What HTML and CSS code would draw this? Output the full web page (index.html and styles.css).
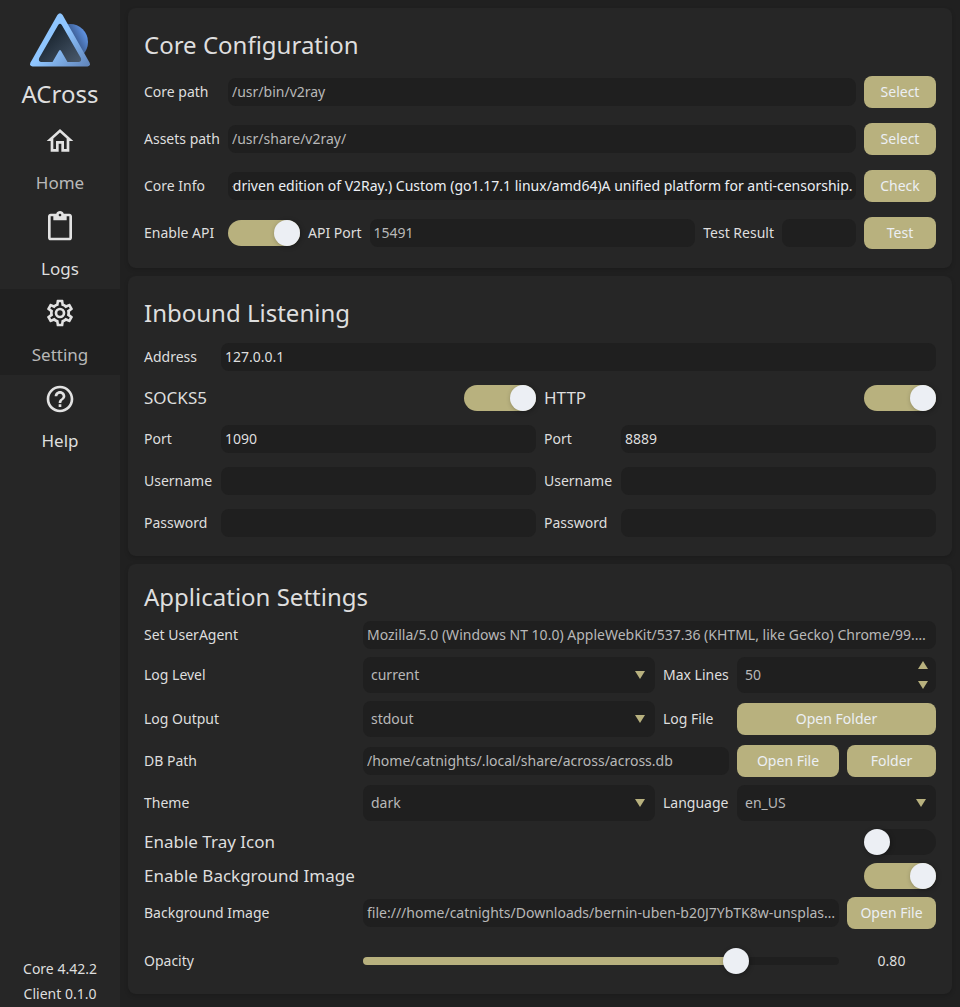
FILE: index.html
```html
<!DOCTYPE html>
<html lang="en">
<head>
<meta charset="utf-8">
<title>ACross</title>
<link rel="stylesheet" href="styles.css">
</head>
<body>
<div class="app">
  <aside class="sidebar">
    <svg class="logo" viewBox="0 0 60 54" aria-hidden="true">
      <defs>
        <linearGradient id="edge" x1="0.3" y1="0.4" x2="1" y2="1"><stop offset="0.2" stop-color="#8fc6ff"/><stop offset="1" stop-color="#5f82b8"/></linearGradient>
        <linearGradient id="core" x1="0.2" y1="0.2" x2="1" y2="1"><stop offset="0" stop-color="#17222c"/><stop offset="1" stop-color="#4a5a6d"/></linearGradient>
        <linearGradient id="moon" x1="0.45" y1="0.6" x2="1" y2="0.3"><stop offset="0.2" stop-color="#2f4a78"/><stop offset="1" stop-color="#6499ea"/></linearGradient>
      </defs>
      <circle cx="40" cy="29" r="18" fill="url(#moon)"/>
      <path d="M27.400 2Q30-1.400 32.600 2L59.500 49.500Q61 53 57.500 53.600H2.500Q-1 53 .5 49.500Z" fill="url(#edge)"/>
      <path d="M28.200 12Q30 9.500 31.800 12L50.800 45Q52 48.600 49 49H37.500L31 37.800Q30 36.200 29 37.800L22.500 49H11Q8 48.600 9.200 45Z" fill="url(#core)"/>
    </svg>
    <h1 class="brand">ACross</h1>
    <nav class="nav">
      <a class="nav-item dim" href="#home">
        <svg class="icon" viewBox="0 0 24 24" aria-hidden="true"><path d="M12 5.690l5 4.500V18h-2v-6H9v6H7v-7.810l5-4.500M12 3L2 12h3v8h6v-6h2v6h6v-8h3L12 3z"/></svg>
        <span>Home</span>
      </a>
      <a class="nav-item" href="#logs">
        <svg class="icon" viewBox="0 0 24 24" aria-hidden="true"><path d="M19 2h-4.180C14.400.84 13.300 0 12 0c-1.300 0-2.400.84-2.820 2H5c-1.100 0-2 .9-2 2v16c0 1.100.9 2 2 2h14c1.100 0 2-.9 2-2V4c0-1.100-.9-2-2-2zm-7 0c.55 0 1 .45 1 1s-.45 1-1 1-1-.45-1-1 .45-1 1-1zm7 18H5V4h2v3h10V4h2v16z"/></svg>
        <span>Logs</span>
      </a>
      <a class="nav-item dim current" href="#setting" aria-current="page">
        <svg class="icon" viewBox="0 0 24 24" aria-hidden="true"><path d="M12 8a4 4 0 0 1 4 4 4 4 0 0 1-4 4 4 4 0 0 1-4-4 4 4 0 0 1 4-4m0 2a2 2 0 0 0-2 2 2 2 0 0 0 2 2 2 2 0 0 0 2-2 2 2 0 0 0-2-2m-2 12c-.25 0-.46-.18-.5-.42l-.37-2.650c-.63-.25-1.170-.59-1.690-.99l-2.490 1.010c-.22.08-.49 0-.61-.22l-2-3.460a.493.493 0 0 1 .12-.64l2.110-1.660L4.500 12l.07-1-2.110-1.630a.493.493 0 0 1-.12-.64l2-3.460c.12-.22.39-.31.61-.22l2.490 1c.52-.39 1.060-.73 1.690-.98l.37-2.650c.04-.24.25-.42.5-.42h4c.25 0 .46.18.5.42l.37 2.650c.63.25 1.170.59 1.690.98l2.490-1c.22-.09.49 0 .61.22l2 3.460c.13.22.07.49-.12.64L19.430 11l.07 1-.07 1 2.110 1.630c.19.15.25.42.12.64l-2 3.460c-.12.22-.39.31-.61.22l-2.490-1c-.52.39-1.060.73-1.690.98l-.37 2.650c-.04.24-.25.42-.5.42h-4m1.250-18-.37 2.610c-1.200.25-2.260.89-3.030 1.780L5.440 7.350l-.75 1.300L6.800 10.200a5.550 5.550 0 0 0 0 3.600l-2.120 1.560.75 1.300 2.430-1.040c.77.88 1.820 1.520 3.010 1.760l.37 2.620h1.520l.37-2.610c1.190-.25 2.240-.89 3.010-1.770l2.430 1.040.75-1.300-2.120-1.550c.4-1.170.4-2.440 0-3.610l2.110-1.550-.75-1.300-2.410 1.040a5.420 5.420 0 0 0-3.030-1.770L12.750 4h-1.500z"/></svg>
        <span>Setting</span>
      </a>
      <a class="nav-item" href="#help">
        <svg class="icon" viewBox="0 0 24 24" aria-hidden="true"><path d="M11 18h2v-2h-2v2zm1-16C6.480 2 2 6.480 2 12s4.480 10 10 10 10-4.480 10-10S17.520 2 12 2zm0 18c-4.410 0-8-3.590-8-8s3.590-8 8-8 8 3.590 8 8-3.590 8-8 8zm0-14c-2.210 0-4 1.790-4 4h2c0-1.100.9-2 2-2s2 .9 2 2c0 2-3 1.750-3 5h2c0-2.250 3-2.500 3-5 0-2.210-1.790-4-4-4z"/></svg>
        <span>Help</span>
      </a>
    </nav>
    <footer class="versions">
      <p>Core 4.42.2</p>
      <p>Client 0.1.0</p>
    </footer>
  </aside>

  <main class="content">
    <section class="panel panel-core">
      <h2>Core Configuration</h2>
      <div class="core-grid">
        <label for="core-path">Core path</label>
        <input class="field dim" id="core-path" type="text" value="/usr/bin/v2ray" readonly>
        <button class="btn" type="button">Select</button>

        <label for="assets-path">Assets path</label>
        <input class="field dim" id="assets-path" type="text" value="/usr/share/v2ray/" readonly>
        <button class="btn" type="button">Select</button>

        <label for="core-info">Core Info</label>
        <input class="field bright" id="core-info" type="text" value="V2Ray 4.42.2 (V2Fly, a community-driven edition of V2Ray.) Custom (go1.17.1 linux/amd64)A unified platform for anti-censorship." readonly>
        <button class="btn" type="button">Check</button>

        <label for="enable-api">Enable API</label>
        <div class="api-row">
          <input class="switch" id="enable-api" type="checkbox" checked>
          <label for="api-port">API Port</label>
          <input class="field dim grow" id="api-port" type="text" value="15491">
          <label for="test-result">Test Result</label>
          <input class="field result" id="test-result" type="text" readonly>
        </div>
        <button class="btn" type="button">Test</button>
      </div>
    </section>

    <section class="panel panel-inbound">
      <h2>Inbound Listening</h2>
      <div class="inbound">
        <div class="pair">
          <label for="address">Address</label>
          <input class="field" id="address" type="text" value="127.0.0.1">
        </div>
        <div class="protocols">
          <div class="protocol">
            <div class="toggle-row"><label for="socks">SOCKS5</label><input class="switch" id="socks" type="checkbox" checked></div>
            <div class="pair"><label for="socks-port">Port</label><input class="field" id="socks-port" type="text" value="1090"></div>
            <div class="pair"><label for="socks-user">Username</label><input class="field" id="socks-user" type="text"></div>
            <div class="pair"><label for="socks-pass">Password</label><input class="field" id="socks-pass" type="password"></div>
          </div>
          <div class="protocol">
            <div class="toggle-row"><label for="http">HTTP</label><input class="switch" id="http" type="checkbox" checked></div>
            <div class="pair"><label for="http-port">Port</label><input class="field" id="http-port" type="text" value="8889"></div>
            <div class="pair"><label for="http-user">Username</label><input class="field" id="http-user" type="text"></div>
            <div class="pair"><label for="http-pass">Password</label><input class="field" id="http-pass" type="password"></div>
          </div>
        </div>
      </div>
    </section>

    <section class="panel panel-app">
      <h2>Application Settings</h2>
      <div class="app-grid">
        <label for="user-agent">Set UserAgent</label>
        <input class="field dim span-4" id="user-agent" type="text" value="Mozilla/5.0 (Windows NT 10.0) AppleWebKit/537.36 (KHTML, like Gecko) Chrome/99.0.4844.51 Safari/537.36">

        <label for="log-level">Log Level</label>
        <div class="select"><select id="log-level"><option>current</option></select></div>
        <label for="max-lines">Max Lines</label>
        <div class="spin span-2">
          <input id="max-lines" type="text" inputmode="numeric" value="50">
          <div class="spin-buttons">
            <button type="button" aria-label="Increase"><svg viewBox="0 0 10 8" aria-hidden="true"><path d="M5 0l5 8H0z"/></svg></button>
            <button type="button" aria-label="Decrease"><svg viewBox="0 0 10 8" aria-hidden="true"><path d="M0 0h10L5 8z"/></svg></button>
          </div>
        </div>

        <label for="log-output">Log Output</label>
        <div class="select"><select id="log-output"><option>stdout</option></select></div>
        <label for="log-folder">Log File</label>
        <button class="btn span-2" id="log-folder" type="button">Open Folder</button>

        <label for="db-path">DB Path</label>
        <input class="field dim span-2" id="db-path" type="text" value="/home/catnights/.local/share/across/across.db" readonly>
        <button class="btn" type="button">Open File</button>
        <button class="btn" type="button">Folder</button>

        <label for="theme">Theme</label>
        <div class="select"><select id="theme"><option>dark</option></select></div>
        <label for="language">Language</label>
        <div class="select span-2"><select id="language"><option>en_US</option></select></div>

        <div class="toggle-row span-all"><label for="tray">Enable Tray Icon</label><input class="switch" id="tray" type="checkbox"></div>
        <div class="toggle-row span-all"><label for="bg-enabled">Enable Background Image</label><input class="switch" id="bg-enabled" type="checkbox" checked></div>

        <label for="bg-image">Background Image</label>
        <input class="field dim span-3" id="bg-image" type="text" value="file:///home/catnights/Downloads/bernin-uben-b20J7YbTK8w-unsplash.jpg" readonly>
        <button class="btn" type="button">Open File</button>

        <label class="opacity-label" for="opacity">Opacity</label>
        <input class="slider span-3" id="opacity" type="range" min="0" max="1" step="0.01" value="0.8">
        <output class="opacity-value" for="opacity">0.80</output>
      </div>
    </section>
  </main>
</div>
<script src="script.js"></script>
</body>
</html>
```

FILE: styles.css
```css
:root {
  --bg: #202020;
  --panel: #262626;
  --field: #1f1f1f;
  --accent: #b8b17e;
  --knob: #eceff4;
  --text: #dedede;
  --dim: #b8b8b8;
}

* { box-sizing: border-box; }

body {
  margin: 0;
  background: var(--bg);
  color: var(--text);
  font: 14px/20px "Noto Sans", sans-serif;
}

h1, h2, p { margin: 0; }

input, select, button {
  min-width: 0;
  margin: 0;
  border: 0;
  color: inherit;
  font: inherit;
}

.app {
  display: flex;
  min-height: 100vh;
}

/* Sidebar */
.sidebar {
  display: flex;
  flex: 0 0 120px;
  flex-direction: column;
  align-items: center;
  padding-top: 13px;
  background: var(--panel);
}

.logo { width: 60px; height: 54px; }

.brand {
  margin: 9px 0 5px;
  font-size: 24px;
  font-weight: 400;
  line-height: 36px;
}

.nav { width: 100%; }

.nav-item {
  display: flex;
  flex-direction: column;
  align-items: center;
  gap: 14px;
  padding: 8px 0;
  color: var(--text);
  font-size: 17px;
  line-height: 24px;
  text-decoration: none;
}

.nav-item span { height: 24px; }
.nav-item.dim span { color: var(--dim); }
.nav-item.current { background: var(--bg); }

.icon {
  width: 32px;
  height: 32px;
  fill: #e2e2e2;
}

.versions {
  display: grid;
  gap: 5px;
  margin-top: auto;
  padding-bottom: 3px;
  text-align: center;
}

/* Panels */
.content {
  display: flex;
  flex: 1;
  flex-direction: column;
  gap: 8px;
  min-width: 0;
  padding: 8px;
}

.panel {
  padding: 19px 16px;
  border-radius: 8px;
  background: var(--panel);
  box-shadow: 0 2px 4px rgba(0, 0, 0, 0.16);
}

.panel h2 {
  margin-bottom: 12px;
  font-size: 24px;
  font-weight: 400;
  line-height: 36px;
}

.panel-core h2 { margin-bottom: 13px; }
.panel-app { padding: 15px 16px 9px; }
.panel-app h2 { margin-bottom: 6px; }

.field {
  width: 100%;
  height: 28px;
  padding: 0 3px 2px 4px;
  border-radius: 8px;
  outline: 0;
  background: var(--field);
  text-overflow: ellipsis;
}

.dim { color: var(--dim); }
.bright { color: #eceff4; text-overflow: clip; }

.btn {
  height: 32px;
  padding: 0 8px;
  border-radius: 8px;
  background: var(--accent);
  color: #eceff4;
}

.switch {
  display: flex;
  flex: 0 0 72px;
  height: 26px;
  border-radius: 13px;
  appearance: none;
  background: var(--field);
}

.switch::before {
  width: 26px;
  height: 26px;
  border-radius: 50%;
  background: var(--knob);
  box-shadow: 1px 1px 5px rgba(0, 0, 0, 0.3);
  content: "";
}

.switch:checked {
  justify-content: flex-end;
  background: var(--accent);
}

.toggle-row {
  display: flex;
  align-items: center;
  justify-content: space-between;
  height: 26px;
  font-size: 17px;
  line-height: 24px;
}

/* Core configuration */
.core-grid {
  display: grid;
  grid-template-columns: 76px minmax(0, 1fr) 72px;
  gap: 15px 8px;
  align-items: center;
}

.api-row {
  display: flex;
  gap: 8px;
  align-items: center;
}

.api-row label { white-space: nowrap; }
.grow { flex: 1; }
.result { flex: 0 0 74px; }

/* Inbound listening */
.inbound, .protocol {
  display: grid;
  gap: 14px;
}

.protocols {
  display: grid;
  grid-template-columns: 1fr 1fr;
  gap: 8px;
}

.pair {
  display: grid;
  grid-template-columns: 69px minmax(0, 1fr);
  gap: 8px;
  align-items: center;
}

/* Application settings */
.app-grid {
  display: grid;
  grid-template-columns: minmax(0, 211fr) minmax(0, 292fr) 66px 102px 89px;
  gap: 8px;
  align-items: center;
}

.span-2 { grid-column: span 2; }
.span-3 { grid-column: span 3; }
.span-4 { grid-column: span 4; }
.span-all { grid-column: 1 / -1; }

.select {
  position: relative;
  border-radius: 8px;
  background: var(--field);
}

.select::after {
  position: absolute;
  top: 14px;
  right: 10px;
  width: 10px;
  height: 8px;
  background: var(--accent);
  clip-path: polygon(0 0, 100% 0, 50% 100%);
  content: "";
  pointer-events: none;
}

.select select {
  width: 100%;
  height: 36px;
  padding: 0 28px 0 8px;
  appearance: none;
  background: transparent;
  color: var(--dim);
}

.spin {
  display: flex;
  height: 36px;
  padding: 0 8px;
  border-radius: 8px;
  background: var(--field);
}

.spin input {
  flex: 1;
  padding: 0;
  background: transparent;
  color: var(--dim);
}

.spin-buttons {
  display: flex;
  flex-direction: column;
  justify-content: space-between;
  padding: 4px 0;
}

.spin-buttons button {
  display: flex;
  padding: 0;
  background: transparent;
}

.spin-buttons svg {
  width: 10px;
  height: 8px;
  fill: var(--accent);
}

.opacity-label { line-height: 48px; }
.opacity-value { text-align: center; }

.slider {
  width: 100%;
  height: 26px;
  appearance: none;
  background: transparent;
}

.slider::-webkit-slider-runnable-track {
  height: 8px;
  border-radius: 4px;
  background: linear-gradient(to right, var(--accent) 78%, var(--field) 78%);
}

.slider::-webkit-slider-thumb {
  width: 26px;
  height: 26px;
  margin-top: -9px;
  border-radius: 50%;
  appearance: none;
  background: var(--knob);
  box-shadow: 1px 1px 5px rgba(0, 0, 0, 0.3);
}
```

FILE: script.js
```js
// Keep the end of the version string in view.
const info = document.getElementById("core-info");
info.scrollLeft = info.scrollWidth;
```
